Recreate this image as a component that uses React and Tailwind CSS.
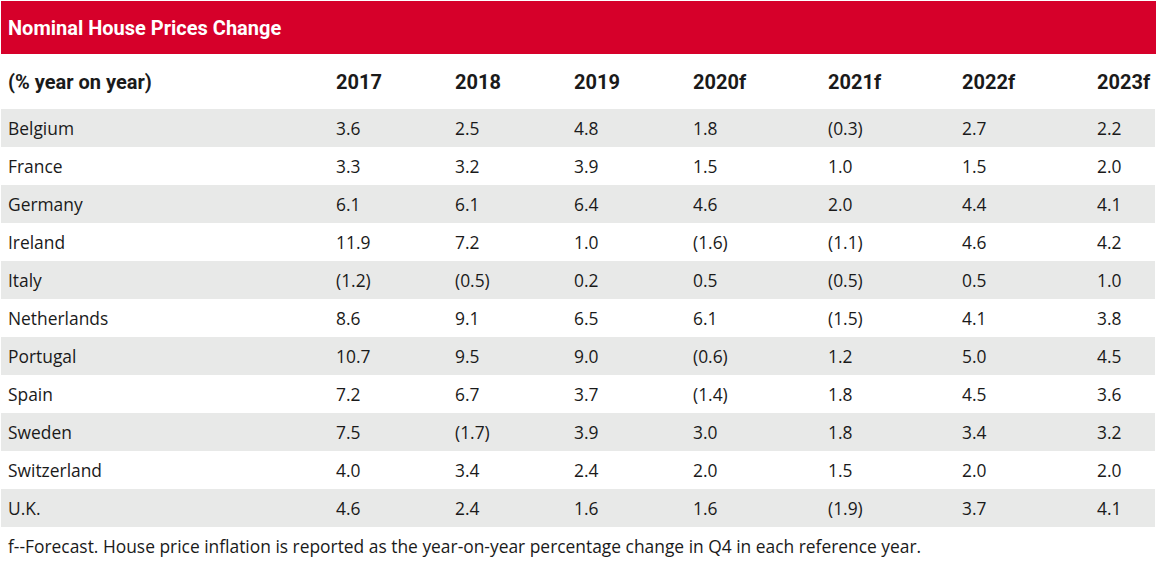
import React from "react";

const rows = [
  ["Belgium", "3.6", "2.5", "4.8", "1.8", "(0.3)", "2.7", "2.2"],
  ["France", "3.3", "3.2", "3.9", "1.5", "1.0", "1.5", "2.0"],
  ["Germany", "6.1", "6.1", "6.4", "4.6", "2.0", "4.4", "4.1"],
  ["Ireland", "11.9", "7.2", "1.0", "(1.6)", "(1.1)", "4.6", "4.2"],
  ["Italy", "(1.2)", "(0.5)", "0.2", "0.5", "(0.5)", "0.5", "1.0"],
  ["Netherlands", "8.6", "9.1", "6.5", "6.1", "(1.5)", "4.1", "3.8"],
  ["Portugal", "10.7", "9.5", "9.0", "(0.6)", "1.2", "5.0", "4.5"],
  ["Spain", "7.2", "6.7", "3.7", "(1.4)", "1.8", "4.5", "3.6"],
  ["Sweden", "7.5", "(1.7)", "3.9", "3.0", "1.8", "3.4", "3.2"],
  ["Switzerland", "4.0", "3.4", "2.4", "2.0", "1.5", "2.0", "2.0"],
  ["U.K.", "4.6", "2.4", "1.6", "1.6", "(1.9)", "3.7", "4.1"],
];

const headers = ["(% year on year)", "2017", "2018", "2019", "2020f", "2021f", "2022f", "2023f"];
const cols = "grid grid-cols-[328px_119px_119px_119px_135px_134px_135px_1fr]";

export default function App() {
  return (
    <div className="w-[1156px] h-[562px] bg-white text-[#1a1a1a]" style={{ fontFamily: "Roboto, 'Liberation Sans', sans-serif" }}>
      <div className="pt-[1px] pl-[1px]">
        <div className="h-[53px] bg-[#d6002a] flex items-center pl-[7px]">
          <span className="text-white font-bold text-[20px]">Nominal House Prices Change</span>
        </div>
        <div className={`${cols} h-[55px] items-center pl-[7px] text-[20px] font-bold`}>
          {headers.map((h) => (
            <div key={h}>{h}</div>
          ))}
        </div>
        <div className="pr-[1px] text-[17.4px]" style={{ fontFamily: "'Open Sans', sans-serif" }}>
          {rows.map((r, i) => (
            <div
              key={r[0]}
              className={`${cols} h-[38px] items-center pl-[7px] ${i % 2 === 0 ? "bg-[#e8e9e8]" : "bg-white"}`}
            >
              {r.map((c, j) => (
                <div key={j}>{c}</div>
              ))}
            </div>
          ))}
          <div className="pl-[7px] pt-[6px]">
            f--Forecast. House price inflation is reported as the year-on-year percentage change in Q4 in each reference year.
          </div>
        </div>
      </div>
    </div>
  );
}
